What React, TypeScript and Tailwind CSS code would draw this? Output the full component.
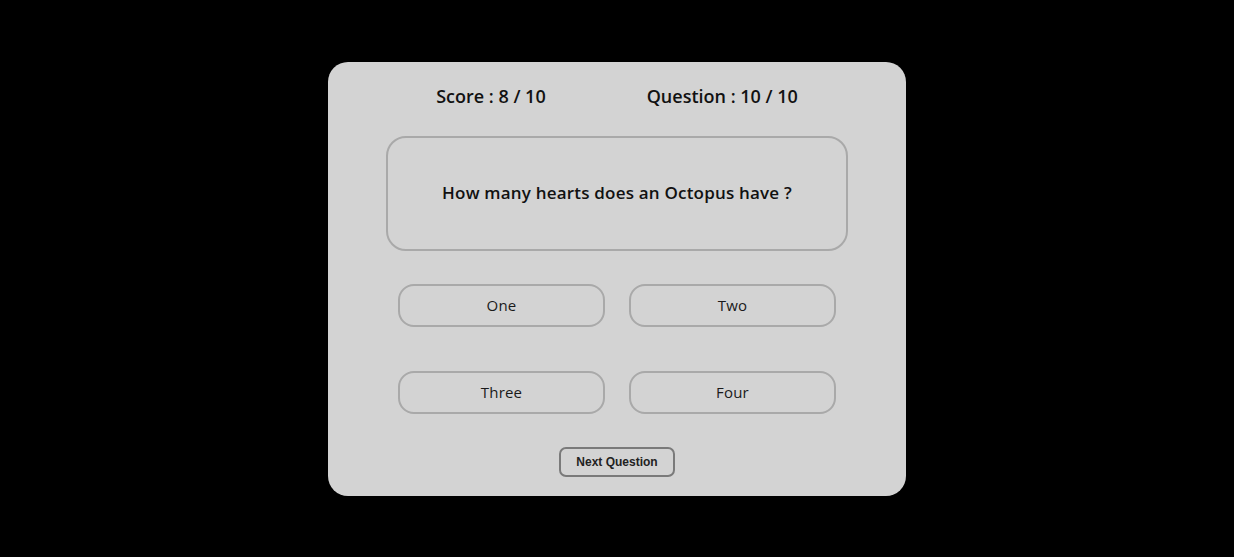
const options = ["One", "Two", "Three", "Four"];

function OptionButton({ label }: { label: string }) {
  return (
    <button className="h-[43px] w-[207px] rounded-[16px] border-2 border-[#a9a9a9] bg-[#d3d3d3] text-[15px] font-medium tracking-[0.2px] text-[#1a1a1a]">
      {label}
    </button>
  );
}

export default function App() {
  return (
    <div className="flex min-h-screen items-center justify-center bg-black font-['Open_Sans',sans-serif]">
      <div className="flex h-[434px] w-[578px] flex-col items-center rounded-[20px] bg-[#d3d3d3] pt-[24px]">
        <div className="flex h-[22px] items-center gap-[101px] text-[18px] font-semibold text-[#111]">
          <span>Score : 8 / 10</span>
          <span>Question : 10 / 10</span>
        </div>

        <div className="mt-[28px] flex h-[115px] w-[462px] items-center justify-center rounded-[20px] border-2 border-[#a9a9a9]">
          <p className="text-[17px] font-semibold tracking-[0.2px] text-[#111]">How many hearts does an Octopus have ?</p>
        </div>

        <div className="mt-[33px] grid grid-cols-2 gap-x-[24px] gap-y-[44px]">
          {options.map((o) => (
            <OptionButton key={o} label={o} />
          ))}
        </div>

        <button className="mt-[33px] h-[30px] w-[116px] rounded-[7px] border-2 border-[#7a7a7a] bg-[#d3d3d3] font-['Liberation_Sans',Arial,sans-serif] text-[12px] font-bold text-[#222]">
          Next Question
        </button>
      </div>
    </div>
  );
}
